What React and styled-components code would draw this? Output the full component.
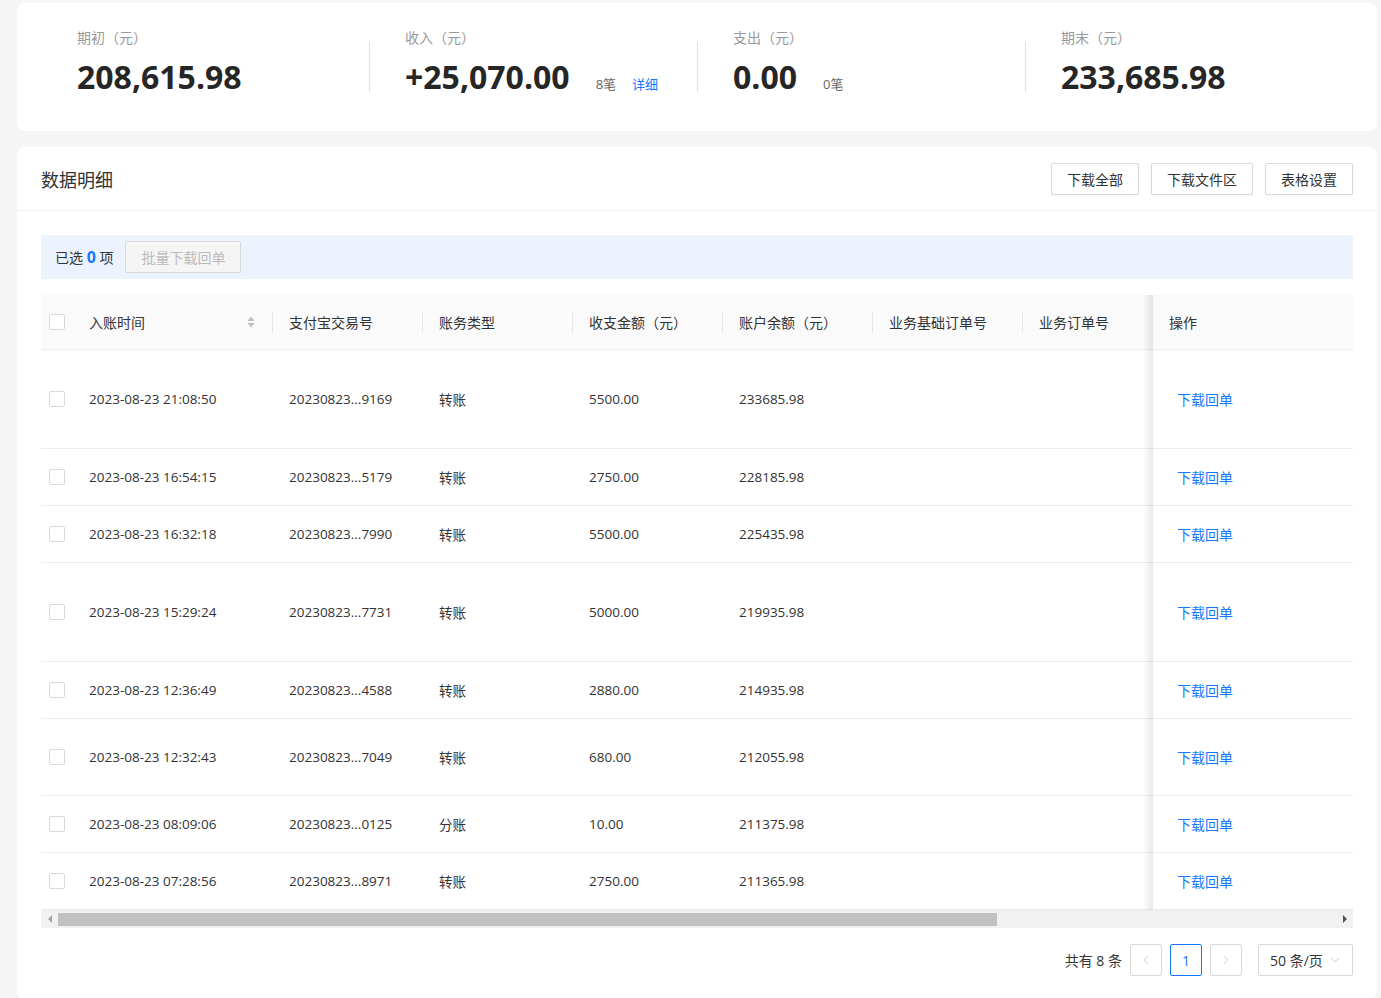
import React from "react";
import styled, { createGlobalStyle } from "styled-components";
import { ChevronLeft, ChevronRight, ChevronDown } from "lucide-react";

const stats = [
  { label: "期初（元）", value: "208,615.98" },
  { label: "收入（元）", value: "+25,070.00", count: "8笔", detail: "详细" },
  { label: "支出（元）", value: "0.00", count: "0笔" },
  { label: "期末（元）", value: "233,685.98" },
];

// the last column sits under the fixed 操作 column and is never seen
const columns = [
  { key: "time", title: "入账时间", width: 200, sort: true, sep: true },
  { key: "tradeNo", title: "支付宝交易号", width: 150, sep: true },
  { key: "type", title: "账务类型", width: 150, sep: true },
  { key: "amount", title: "收支金额（元）", width: 150, sep: true },
  { key: "balance", title: "账户余额（元）", width: 150, sep: true },
  { key: "baseOrder", title: "业务基础订单号", width: 150, sep: true },
  { key: "order", title: "业务订单号", width: 150, sep: true },
  { key: "remark", title: "", width: 453 },
];

const rows = [
  { id: 1, time: "2023-08-23 21:08:50", tradeNo: "20230823...9169", type: "转账", amount: "5500.00", balance: "233685.98", h: 99 },
  { id: 2, time: "2023-08-23 16:54:15", tradeNo: "20230823...5179", type: "转账", amount: "2750.00", balance: "228185.98", h: 57 },
  { id: 3, time: "2023-08-23 16:32:18", tradeNo: "20230823...7990", type: "转账", amount: "5500.00", balance: "225435.98", h: 57 },
  { id: 4, time: "2023-08-23 15:29:24", tradeNo: "20230823...7731", type: "转账", amount: "5000.00", balance: "219935.98", h: 99 },
  { id: 5, time: "2023-08-23 12:36:49", tradeNo: "20230823...4588", type: "转账", amount: "2880.00", balance: "214935.98", h: 57 },
  { id: 6, time: "2023-08-23 12:32:43", tradeNo: "20230823...7049", type: "转账", amount: "680.00", balance: "212055.98", h: 77 },
  { id: 7, time: "2023-08-23 08:09:06", tradeNo: "20230823...0125", type: "分账", amount: "10.00", balance: "211375.98", h: 57 },
  { id: 8, time: "2023-08-23 07:28:56", tradeNo: "20230823...8971", type: "转账", amount: "2750.00", balance: "211365.98", h: 57 },
];

const CHECK_WIDTH = 32;
const OP_WIDTH = 200;
const VIEW_WIDTH = 1312;
const tableWidth = CHECK_WIDTH + OP_WIDTH + columns.reduce((s, c) => s + c.width, 0);

const SortIcon = () => (
  <svg width="8" height="12" viewBox="0 0 8 12">
    <path d="M4 0.5 L7.5 5 H0.5 Z" fill="#bfbfbf" />
    <path d="M4 11.5 L7.5 7 H0.5 Z" fill="#bfbfbf" />
  </svg>
);

const App = () => {
  const thumbWidth = Math.round((VIEW_WIDTH / tableWidth) * (VIEW_WIDTH - 34));

  return (
    <Page>
      <GlobalStyle />
      <SummaryCard>
        {stats.map((stat, i) => (
          <Stat key={stat.label} $divider={i > 0}>
            <StatLabel>{stat.label}</StatLabel>
            <StatLine>
              <StatValue>{stat.value}</StatValue>
              {stat.count && <StatCount>{stat.count}</StatCount>}
              {stat.detail && <StatLink>{stat.detail}</StatLink>}
            </StatLine>
          </Stat>
        ))}
      </SummaryCard>

      <DetailCard>
        <CardHeader>
          <CardTitle>数据明细</CardTitle>
          <Actions>
            <Button>下载全部</Button>
            <Button>下载文件区</Button>
            <Button>表格设置</Button>
          </Actions>
        </CardHeader>

        <CardBody>
          <SelectionBar>
            <span>已选 <SelectedCount>0</SelectedCount> 项</span>
            <Button disabled>批量下载回单</Button>
          </SelectionBar>

          <TableScroll>
            <Table style={{ width: tableWidth }}>
              <colgroup>
                <col style={{ width: CHECK_WIDTH }} />
                {columns.map(c => <col key={c.key} style={{ width: c.width }} />)}
                <col style={{ width: OP_WIDTH }} />
              </colgroup>
              <thead>
                <tr>
                  <HeadCell $check><Checkbox /></HeadCell>
                  {columns.map(c => (
                    <HeadCell key={c.key} $sep={c.sep}>
                      <HeadInner>
                        {c.title}
                        {c.sort && <SortIcon />}
                      </HeadInner>
                    </HeadCell>
                  ))}
                  <OpHead>操作</OpHead>
                </tr>
              </thead>
              <tbody>
                {rows.map(r => (
                  <Row key={r.id} $h={r.h}>
                    <Cell $check><Checkbox /></Cell>
                    {columns.map(c => <Cell key={c.key}>{r[c.key]}</Cell>)}
                    <OpCell><LinkText>下载回单</LinkText></OpCell>
                  </Row>
                ))}
              </tbody>
            </Table>
          </TableScroll>

          <ScrollTrack>
            <ScrollArrow $dir="left" />
            <ScrollThumb style={{ width: thumbWidth }} />
            <ScrollSpacer />
            <ScrollArrow $dir="right" />
          </ScrollTrack>

          <Pager>
            <Total>共有 8 条</Total>
            <PageButton><ChevronLeft size={14} strokeWidth={1.5} color="#bfbfbf" /></PageButton>
            <PageButton $active>1</PageButton>
            <PageButton><ChevronRight size={14} strokeWidth={1.5} color="#bfbfbf" /></PageButton>
            <SizeSelect>
              50 条/页
              <ChevronDown size={14} strokeWidth={1.5} color="#bfbfbf" />
            </SizeSelect>
          </Pager>
        </CardBody>
      </DetailCard>
    </Page>
  );
};

const GlobalStyle = createGlobalStyle`
  * { box-sizing: border-box; }
  body {
    margin: 0;
    background: #f5f5f5;
    font-family: "Open Sans", "Noto Sans CJK SC", sans-serif;
    color: #333;
  }
`;

const Page = styled.div`
  padding: 3px 4px 0 17px;
  display: flex;
  flex-direction: column;
  gap: 16px;
`;

const SummaryCard = styled.div`
  background: #fff;
  border-radius: 8px;
  padding: 25px 24px 34px;
  display: grid;
  grid-template-columns: repeat(4, 1fr);
`;

const Stat = styled.div`
  position: relative;
  padding-left: 36px;
  display: flex;
  flex-direction: column;
  gap: 9px;

  &::before {
    content: "";
    display: ${p => (p.$divider ? "block" : "none")};
    position: absolute;
    left: 0;
    top: 14px;
    height: 50px;
    width: 1px;
    background: #e0e0e0;
  }
`;

const StatLabel = styled.div`
  font-size: 14px;
  line-height: 20px;
  color: #999;
`;

const StatLine = styled.div`
  display: flex;
  align-items: baseline;
  height: 40px;
`;

const StatValue = styled.span`
  font-size: 32px;
  line-height: 40px;
  font-weight: 700;
  color: #262626;
`;

const StatCount = styled.span`
  margin-left: 26px;
  font-size: 13px;
  color: #666;
`;

const StatLink = styled.span`
  margin-left: 16px;
  font-size: 13px;
  color: #1677ff;
`;

const DetailCard = styled.div`
  background: #fff;
  border-radius: 8px;
  padding-bottom: 24px;
`;

const CardHeader = styled.div`
  height: 64px;
  padding: 0 24px;
  display: flex;
  align-items: center;
  justify-content: space-between;
  border-bottom: 1px solid #efefef;
`;

const CardTitle = styled.h2`
  margin: 0;
  font-size: 18px;
  font-weight: 400;
  color: #333;
`;

const Actions = styled.div`
  display: flex;
  gap: 12px;
`;

const Button = styled.button`
  height: 32px;
  padding: 0 15px;
  font: inherit;
  font-size: 14px;
  color: ${p => (p.disabled ? "#bbb" : "#333")};
  background: ${p => (p.disabled ? "#f5f5f5" : "#fff")};
  border: 1px solid #d9d9d9;
  border-radius: 2px;
  box-shadow: ${p => (p.disabled ? "none" : "0 1px 2px rgba(0,0,0,0.04)")};
`;

const CardBody = styled.div`
  padding: 24px 24px 0;
`;

const SelectionBar = styled.div`
  height: 44px;
  padding: 0 14px;
  background: #ecf3ff;
  display: flex;
  align-items: center;
  gap: 12px;
  font-size: 14px;
  color: #333;
  margin-bottom: 16px;
`;

const SelectedCount = styled.b`
  color: #1677ff;
  font-size: 16px;
`;

const TableScroll = styled.div`
  overflow: hidden;
`;

const Table = styled.table`
  table-layout: fixed;
  border-collapse: separate;
  border-spacing: 0;
`;

const HeadCell = styled.th`
  position: relative;
  height: 55px;
  padding: 0 ${p => (p.$check ? "8px" : "16px")};
  background: #fafafa;
  border-bottom: 1px solid #ededed;
  text-align: left;
  font-size: 14px;
  font-weight: 400;
  color: #333;
  white-space: nowrap;

  &::after {
    content: "";
    display: ${p => (p.$sep ? "block" : "none")};
    position: absolute;
    right: 0;
    top: 50%;
    height: 22px;
    margin-top: -11px;
    width: 1px;
    background: #e8e8e8;
  }
`;

const HeadInner = styled.div`
  display: flex;
  align-items: center;
  justify-content: space-between;
  padding-right: 2px;
`;

const fixedShadow = `
  position: sticky;
  right: 0;
  z-index: 2;

  &::before {
    content: "";
    position: absolute;
    left: -10px;
    top: 0;
    bottom: -1px;
    width: 10px;
    background: linear-gradient(to left, rgba(0, 0, 0, 0.09), rgba(0, 0, 0, 0));
    pointer-events: none;
  }
`;

const OpHead = styled(HeadCell)`
  ${fixedShadow}
`;

const Row = styled.tr`
  & > td {
    height: ${p => p.$h}px;
  }
`;

const Cell = styled.td`
  padding: 0 ${p => (p.$check ? "8px" : "16px")};
  border-bottom: 1px solid #ededed;
  font-size: 13.5px;
  color: #333;
  white-space: nowrap;
  background: #fff;
`;

const OpCell = styled(Cell)`
  ${fixedShadow}
  padding-left: 24px;
`;

const LinkText = styled.span`
  color: #1677ff;
  font-size: 14px;
`;

const Checkbox = styled.span`
  display: block;
  width: 16px;
  height: 16px;
  border: 1px solid #d9d9d9;
  border-radius: 2px;
  background: #fff;
`;

const ScrollTrack = styled.div`
  height: 18px;
  background: #f1f1f1;
  display: flex;
  align-items: center;
`;

const ScrollArrow = styled.span`
  width: 17px;
  height: 18px;
  display: flex;
  align-items: center;
  justify-content: center;

  &::before {
    content: "";
    border-top: 4px solid transparent;
    border-bottom: 4px solid transparent;
    border-${p => (p.$dir === "left" ? "right" : "left")}: 4px solid
      ${p => (p.$dir === "left" ? "#a3a3a3" : "#505050")};
  }
`;

const ScrollThumb = styled.div`
  height: 13px;
  background: #c1c1c1;
`;

const ScrollSpacer = styled.div`
  flex: 1;
`;

const Pager = styled.div`
  margin-top: 16px;
  display: flex;
  justify-content: flex-end;
  align-items: center;
  gap: 8px;
`;

const Total = styled.span`
  font-size: 14px;
  color: #333;
`;

const PageButton = styled.div`
  width: 32px;
  height: 32px;
  display: flex;
  align-items: center;
  justify-content: center;
  border: 1px solid ${p => (p.$active ? "#1677ff" : "#d9d9d9")};
  border-radius: 2px;
  color: ${p => (p.$active ? "#1677ff" : "#333")};
  font-size: 14px;
`;

const SizeSelect = styled.div`
  margin-left: 8px;
  width: 95px;
  height: 32px;
  padding: 0 10px 0 11px;
  display: flex;
  align-items: center;
  justify-content: space-between;
  border: 1px solid #d9d9d9;
  border-radius: 2px;
  font-size: 14px;
  color: #333;
`;

export default App;
